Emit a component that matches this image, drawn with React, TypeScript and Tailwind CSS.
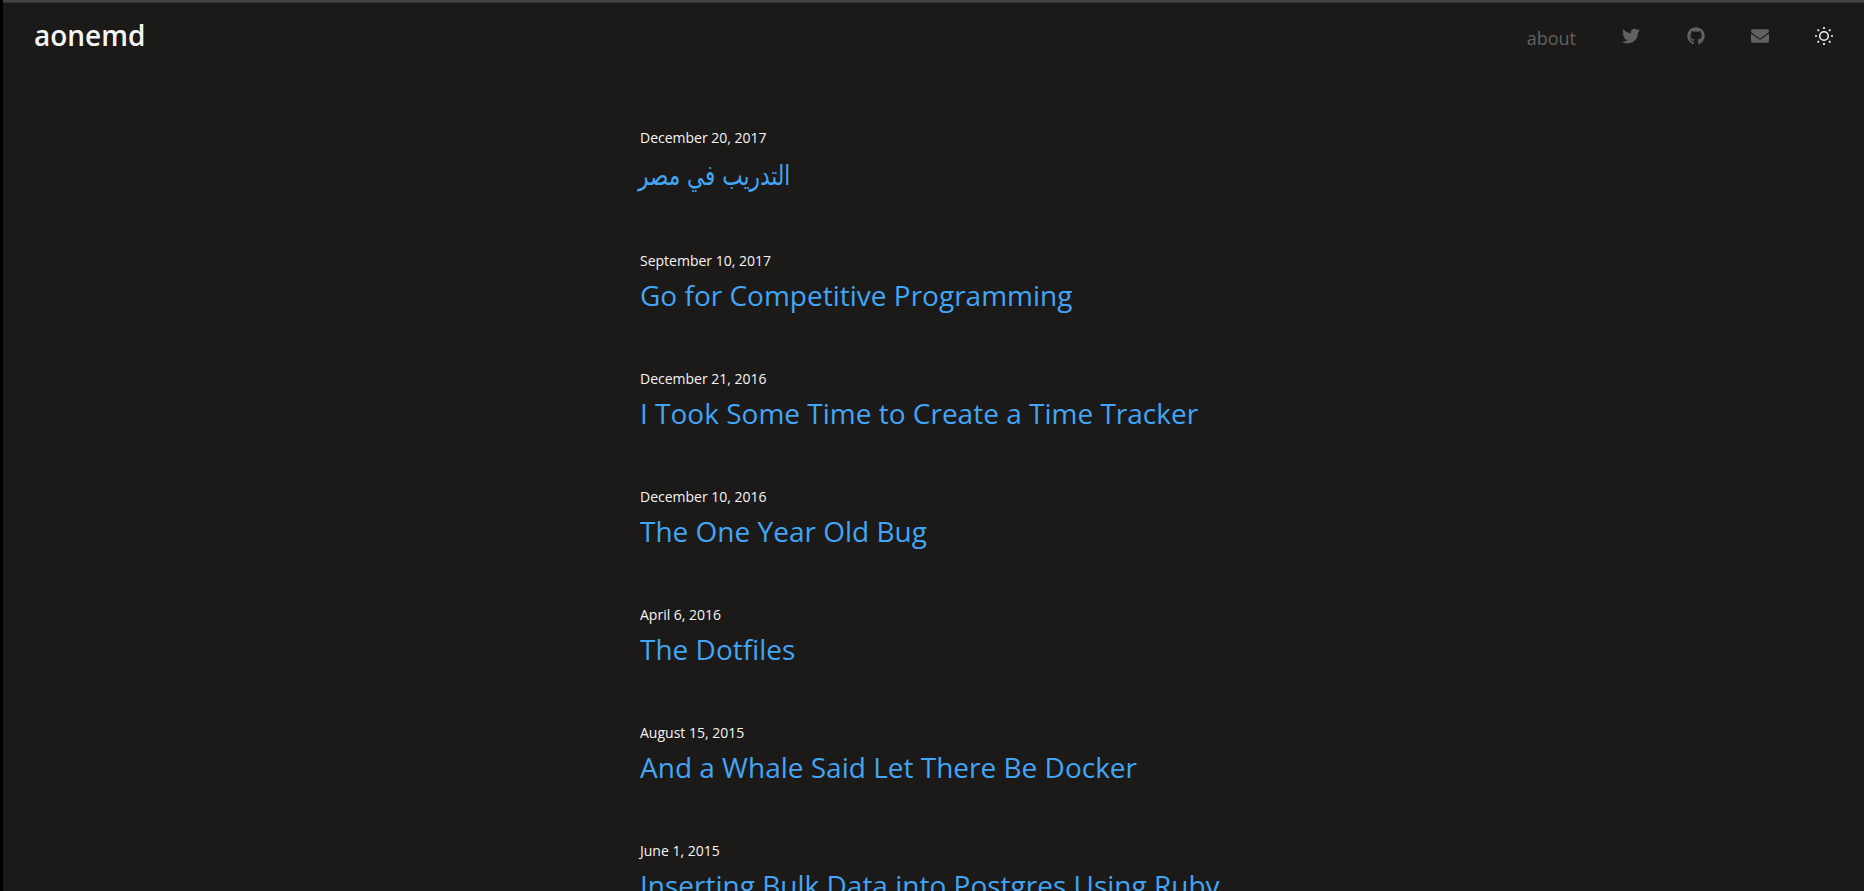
import { FaEnvelope, FaGithub, FaTwitter } from "react-icons/fa";

const posts = [
  { date: "September 10, 2017", title: "Go for Competitive Programming" },
  { date: "December 21, 2016", title: "I Took Some Time to Create a Time Tracker" },
  { date: "December 10, 2016", title: "The One Year Old Bug" },
  { date: "April 6, 2016", title: "The Dotfiles" },
  { date: "August 15, 2015", title: "And a Whale Said Let There Be Docker" },
  { date: "June 1, 2015", title: "Inserting Bulk Data into Postgres Using Ruby" },
];

function SunIcon() {
  return (
    <svg viewBox="0 0 18 18" className="size-[18px] text-[#f5f5f5]" fill="none" stroke="currentColor">
      <circle cx="9" cy="9" r="4.3" strokeWidth="1.5" />
      <path
        d="M9 0v2M9 16v2M0 9h2M16 9h2M2.5 2.5l1.5 1.5M14 14l1.5 1.5M2.5 15.5l1.5-1.5M14 4l1.5-1.5"
        strokeWidth="1.7"
      />
    </svg>
  );
}

function Header() {
  return (
    <header className="flex h-[66px] items-center justify-between pl-[31px] pr-[31px]">
      <a className="-mt-0.5 text-[28px] leading-[64px] font-semibold text-[#f5f5f5]">aonemd</a>
      <nav className="flex items-center text-[#616161]">
        <a className="mr-[46px] pt-1 text-lg leading-6">about</a>
        <FaTwitter className="mr-[47px] size-[18px]" />
        <FaGithub className="mr-[46px] size-[18px]" />
        <FaEnvelope className="mr-[46px] size-[18px]" />
        <SunIcon />
      </nav>
    </header>
  );
}

export default function App() {
  return (
    <div className="h-[891px] overflow-hidden border-l-[3px] border-black bg-[#1b1a18] font-['Open_Sans',sans-serif]">
      <div className="h-[3px] border-b border-[#333] bg-[#444]" />
      <Header />
      <main className="ml-[637px] pt-[59px]">
        <article className="h-[123px]">
          <time className="block text-sm leading-5 text-[#f5f5f5]">December 20, 2017</time>
          <h2
            dir="rtl"
            className="mt-[3px] -ml-0.5 w-fit scale-y-115 text-[24px] leading-[50px] text-[#42a5f5] font-['DejaVu_Sans_Condensed','DejaVu_Sans',sans-serif]"
          >
            التدريب في مصر
          </h2>
        </article>
        {posts.map((post) => (
          <article key={post.title} className="h-[118px]">
            <time className="block text-sm leading-5 text-[#f5f5f5]">{post.date}</time>
            <h2 className="mt-[3px] text-[28px] leading-[42px] whitespace-nowrap text-[#42a5f5]">{post.title}</h2>
          </article>
        ))}
      </main>
    </div>
  );
}
